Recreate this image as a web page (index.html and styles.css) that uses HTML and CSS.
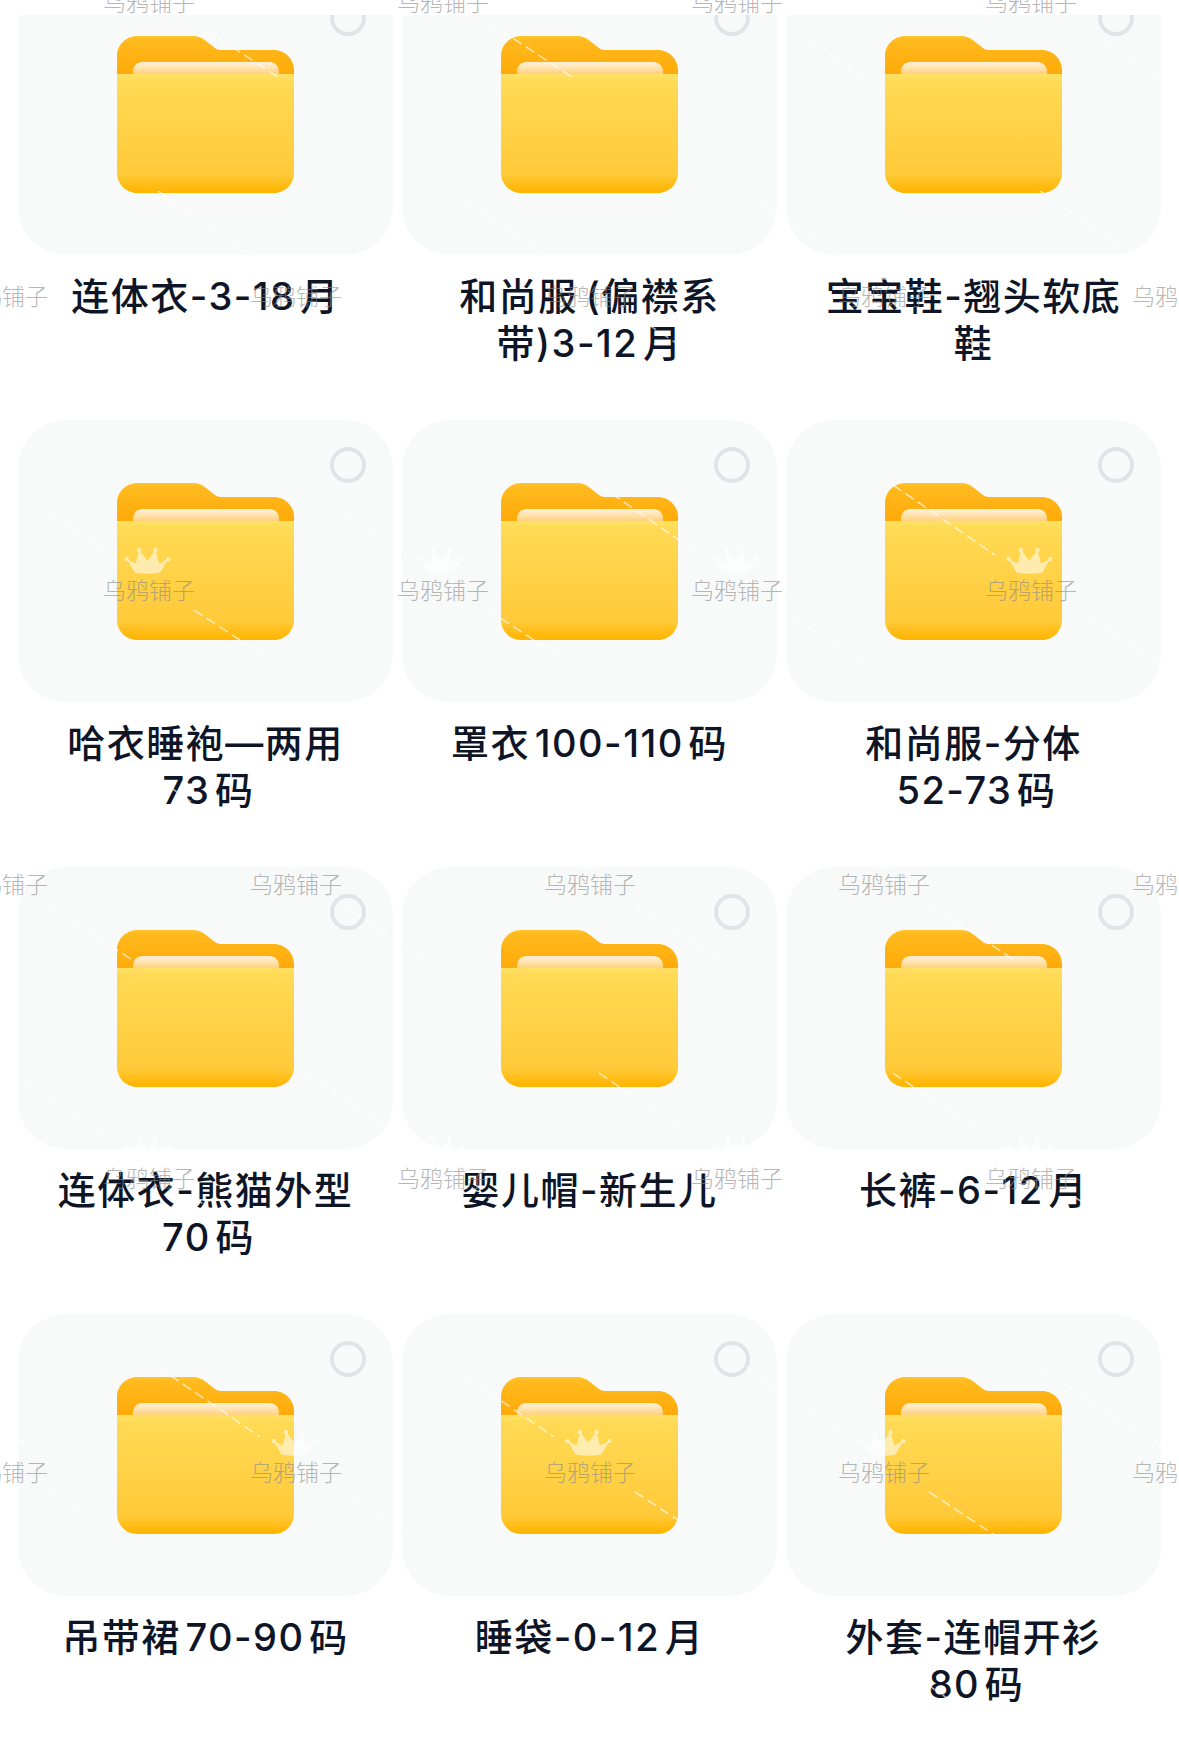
FILE: index.html
```html
<!DOCTYPE html>
<html lang="zh-CN">
<head>
<meta charset="utf-8">
<title>文件夹</title>
<link rel="stylesheet" href="styles.css">
</head>
<body>
<svg class="defs" width="0" height="0" aria-hidden="true">
  <defs>
    <linearGradient id="gBack" x1="0" y1="0" x2="0" y2="1">
      <stop offset="0" stop-color="#ffc52e"/>
      <stop offset="0.1" stop-color="#ffba1e"/>
      <stop offset="1" stop-color="#ffa908"/>
    </linearGradient>
    <linearGradient id="gPaper" x1="0" y1="0" x2="0" y2="1">
      <stop offset="0" stop-color="#fff1d8"/>
      <stop offset="0.35" stop-color="#ffe6b8"/>
      <stop offset="1" stop-color="#ffca6c"/>
    </linearGradient>
    <linearGradient id="gFront" x1="0" y1="0" x2="0" y2="1">
      <stop offset="0" stop-color="#ffe268"/>
      <stop offset="0.06" stop-color="#ffda54"/>
      <stop offset="0.84" stop-color="#ffca3a"/>
      <stop offset="0.96" stop-color="#ffb90c"/>
      <stop offset="1" stop-color="#ffb500"/>
    </linearGradient>
    <symbol id="folder" viewBox="0 0 177 157">
      <path fill="url(#gBack)" d="M0 40V20C0 9 9 0 20 0H76C81 0 85 1.600 89 5L98 12C100 13.500 102 14 105 14H157C168 14 177 23 177 34V40Z"/>
      <path fill="url(#gPaper)" d="M16 40V36C16 30 20 26 26 26H152C158 26 162 30 162 36V40Z"/>
      <path fill="url(#gFront)" d="M0 38H177V137C177 148 168 157 157 157H20C9 157 0 148 0 137Z"/>
    </symbol>
    <g id="mark">
      <g class="wm-crown">
        <path d="M21.700 -20L30.700 -15.500 34 -29 42.300 -18.500 50.500 -29 54 -15.500 63.300 -20 55.500 -6.500Q42.300 -4 29.500 -6.500Z"/>
        <circle cx="21.700" cy="-20" r="2.200"/>
        <circle cx="34" cy="-29" r="2.200"/>
        <circle cx="50.500" cy="-29" r="2.200"/>
        <circle cx="63.300" cy="-20" r="2.200"/>
      </g>
      <text class="wm-text" x="-2" y="20">乌鸦铺子</text>
      <line class="wm-line" x1="-94" y1="-94" x2="8" y2="-24"/>
      <line class="wm-line" x1="89" y1="31" x2="173" y2="86"/>
    </g>
  </defs>
</svg>

<div class="page">
  <div class="top-strip"></div>
  <main class="grid">
    <article class="item"><div class="card"><span class="radio"></span><svg class="folder"><use href="#folder"/></svg></div><p class="label">连体衣-3-18月</p></article>
    <article class="item"><div class="card"><span class="radio"></span><svg class="folder"><use href="#folder"/></svg></div><p class="label">和尚服&#8201;(偏襟系<br>带)3-12月</p></article>
    <article class="item"><div class="card"><span class="radio"></span><svg class="folder"><use href="#folder"/></svg></div><p class="label">宝宝鞋-翘头软底<br>鞋</p></article>

    <article class="item"><div class="card"><span class="radio"></span><svg class="folder"><use href="#folder"/></svg></div><p class="label">哈衣睡袍—两用<br><span class="size">73码</span></p></article>
    <article class="item"><div class="card"><span class="radio"></span><svg class="folder"><use href="#folder"/></svg></div><p class="label">罩衣100-110码</p></article>
    <article class="item"><div class="card"><span class="radio"></span><svg class="folder"><use href="#folder"/></svg></div><p class="label">和尚服-分体<br><span class="size">52-73码</span></p></article>

    <article class="item"><div class="card"><span class="radio"></span><svg class="folder"><use href="#folder"/></svg></div><p class="label">连体衣-熊猫外型<br><span class="size">70码</span></p></article>
    <article class="item"><div class="card"><span class="radio"></span><svg class="folder"><use href="#folder"/></svg></div><p class="label">婴儿帽-新生儿</p></article>
    <article class="item"><div class="card"><span class="radio"></span><svg class="folder"><use href="#folder"/></svg></div><p class="label">长裤-6-12月</p></article>

    <article class="item"><div class="card"><span class="radio"></span><svg class="folder"><use href="#folder"/></svg></div><p class="label">吊带裙70-90码</p></article>
    <article class="item"><div class="card"><span class="radio"></span><svg class="folder"><use href="#folder"/></svg></div><p class="label">睡袋-0-12月</p></article>
    <article class="item"><div class="card"><span class="radio"></span><svg class="folder"><use href="#folder"/></svg></div><p class="label">外套-连帽开衫<br><span class="size">80码</span></p></article>
  </main>

  <svg class="watermark" width="1179" height="1744" aria-hidden="true">
    <use href="#mark" x="-189" y="-9"/><use href="#mark" x="105" y="-9"/><use href="#mark" x="399" y="-9"/><use href="#mark" x="693" y="-9"/><use href="#mark" x="987" y="-9"/><use href="#mark" x="1281" y="-9"/>
    <use href="#mark" x="-42" y="285"/><use href="#mark" x="252" y="285"/><use href="#mark" x="546" y="285"/><use href="#mark" x="840" y="285"/><use href="#mark" x="1134" y="285"/>
    <use href="#mark" x="-189" y="579"/><use href="#mark" x="105" y="579"/><use href="#mark" x="399" y="579"/><use href="#mark" x="693" y="579"/><use href="#mark" x="987" y="579"/><use href="#mark" x="1281" y="579"/>
    <use href="#mark" x="-42" y="873"/><use href="#mark" x="252" y="873"/><use href="#mark" x="546" y="873"/><use href="#mark" x="840" y="873"/><use href="#mark" x="1134" y="873"/>
    <use href="#mark" x="-189" y="1167"/><use href="#mark" x="105" y="1167"/><use href="#mark" x="399" y="1167"/><use href="#mark" x="693" y="1167"/><use href="#mark" x="987" y="1167"/><use href="#mark" x="1281" y="1167"/>
    <use href="#mark" x="-42" y="1461"/><use href="#mark" x="252" y="1461"/><use href="#mark" x="546" y="1461"/><use href="#mark" x="840" y="1461"/><use href="#mark" x="1134" y="1461"/>
    <use href="#mark" x="-189" y="1755"/><use href="#mark" x="105" y="1755"/><use href="#mark" x="399" y="1755"/><use href="#mark" x="693" y="1755"/><use href="#mark" x="987" y="1755"/><use href="#mark" x="1281" y="1755"/>
  </svg>
</div>
</body>
</html>
```

FILE: styles.css
```css
* {
  box-sizing: border-box;
}

html,
body {
  margin: 0;
  background: #ffffff;
}

.defs {
  position: absolute;
}

.page {
  position: relative;
  width: 1179px;
  height: 1744px;
  overflow: hidden;
  font-family: Inter, "Noto Sans CJK SC", sans-serif;
}

.top-strip {
  position: relative;
  z-index: 2;
  height: 15px;
  background: #ffffff;
}

.grid {
  display: grid;
  grid-template-columns: repeat(3, 375px);
  column-gap: 9px;
  row-gap: 53px;
  padding: 0 18px;
  margin-top: -42px;
}

.item {
  min-width: 0;
}

.card {
  position: relative;
  height: 282px;
  padding-top: 63px;
  border-radius: 48px;
  background: #f8fafa;
  display: flex;
  justify-content: center;
  align-items: flex-start;
}

.radio {
  position: absolute;
  top: 27px;
  right: 27px;
  width: 36px;
  height: 36px;
  border: 4px solid #e1e3e8;
  border-radius: 50%;
}

.folder {
  display: block;
  width: 177px;
  height: 157px;
}

.label {
  margin: 18px 0 0;
  height: 94px;
  font-size: 38px;
  line-height: 47px;
  font-weight: 500;
  letter-spacing: 1.5px;
  text-align: center;
  color: #0d1526;
  text-autospace: normal;
}

.size {
  padding-left: 6px;
}

.watermark {
  position: absolute;
  top: 0;
  left: 0;
  z-index: 3;
  pointer-events: none;
}

.wm-text {
  font-family: "Noto Sans CJK SC", sans-serif;
  font-size: 23px;
  font-weight: 300;
  fill: #8c8c8c;
  fill-opacity: 0.65;
}

.wm-crown {
  fill: #ffffff;
  fill-opacity: 0.55;
}

.wm-line {
  stroke: #ffffff;
  stroke-opacity: 0.65;
  stroke-width: 1.5;
  stroke-dasharray: 10 5;
}
```
